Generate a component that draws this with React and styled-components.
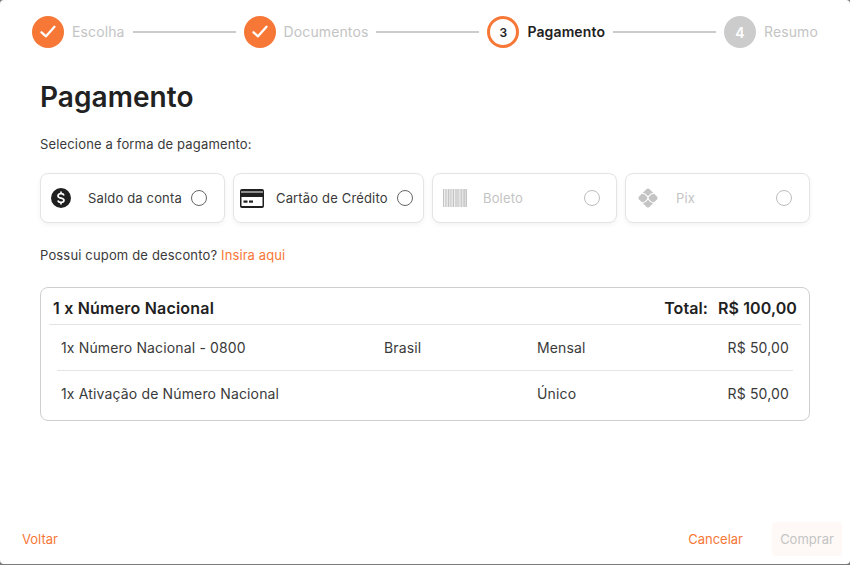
import React from "react";
import styled, { createGlobalStyle } from "styled-components";

const ORANGE = "#f77736";
const DARK = "#212121";
const TEXT = "#3a3a3a";
const MUTED = "#c4c4c4";

const Global = createGlobalStyle`
  html, body { margin: 0; padding: 0; background: #7a7a7a; }
  body { font-family: Inter, "Liberation Sans", sans-serif; }
  * { box-sizing: border-box; }
`;

const Modal = styled.div`
  width: 850px;
  height: 564px;
  background: #fff;
  border-radius: 4px;
  display: flex;
  flex-direction: column;
  overflow: hidden;
`;

const Stepper = styled.div`
  display: flex;
  align-items: center;
  padding: 16px 32px 0;
  height: 48px;
`;

const Step = styled.div`
  display: flex;
  align-items: center;
  gap: 8px;
  flex: none;
`;

const Circle = styled.div`
  width: 32px;
  height: 32px;
  border-radius: 50%;
  display: flex;
  align-items: center;
  justify-content: center;
  flex: none;
  font-size: ${p => (p.$state === "active" ? "12px" : "14px")};
  font-weight: 600;
  color: ${p => (p.$state === "active" ? DARK : "#fff")};
  background: ${p => (p.$state === "done" ? ORANGE : p.$state === "active" ? "#fff" : "#cccccc")};
  border: ${p => (p.$state === "active" ? `3px solid ${ORANGE}` : "none")};
`;

const StepLabel = styled.span`
  padding-bottom: 1px;
  font-size: 14px;
  letter-spacing: 0.12px;
  font-weight: ${p => (p.$active ? 600 : 400)};
  color: ${p => (p.$active ? DARK : MUTED)};
`;

const Connector = styled.div`
  flex: 1;
  height: 2px;
  margin: 0 8px;
  background: #cccccc;
`;

const Body = styled.main`
  flex: 1;
  display: flex;
  flex-direction: column;
  padding: 0 40px;
`;

const Title = styled.h1`
  margin: 32px 0 0;
  font-size: 28px;
  line-height: 34px;
  font-weight: 600;
  letter-spacing: 0.05px;
  color: ${DARK};
`;

const Hint = styled.p`
  margin: 22px 0 0;
  font-size: 13px;
  line-height: 17px;
  letter-spacing: 0.16px;
  color: ${TEXT};
`;

const Methods = styled.div`
  display: flex;
  gap: 8px;
  margin-top: 20px;
`;

const Method = styled.div`
  width: ${p => p.$w}px;
  height: 50px;
  flex: none;
  display: flex;
  align-items: center;
  padding: 0 ${p => p.$pr}px 0 ${p => p.$pl}px;
  background: #fff;
  border: 1px solid #e4e4e4;
  border-radius: 8px;
  box-shadow: 0 2px 5px rgba(0, 0, 0, 0.05);
  color: ${p => (p.$off ? MUTED : TEXT)};
`;

const IconSlot = styled.div`
  width: ${p => p.$w}px;
  flex: none;
  display: flex;
  align-items: center;
`;

const MethodLabel = styled.span`
  flex: 1;
  font-size: 13px;
  letter-spacing: 0.16px;
  white-space: nowrap;
`;

const Radio = styled.span`
  width: 16px;
  height: 16px;
  flex: none;
  border-radius: 50%;
  border: 1.75px solid ${p => (p.$off ? "#bdbdbd" : "#666666")};
`;

const Coupon = styled.p`
  margin: 24px 0 0;
  font-size: 13px;
  line-height: 17px;
  letter-spacing: 0.16px;
  color: ${TEXT};
`;

const Link = styled.a`
  letter-spacing: 0.1px;
  color: ${ORANGE};
`;

const Summary = styled.section`
  margin-top: 23px;
  height: 134px;
  border: 1px solid #cfcfcf;
  border-radius: 8px;
  padding: 0 8px;
  display: flex;
  flex-direction: column;
`;

const SummaryHead = styled.div`
  height: 37px;
  flex: none;
  display: flex;
  align-items: center;
  justify-content: space-between;
  padding: 3px 4px 0;
  border-bottom: 1px solid #e4e4e4;
  font-size: 16px;
  font-weight: 600;
  letter-spacing: 0.2px;
  color: ${DARK};
`;

const Total = styled.span`
  display: flex;
  gap: 10px;
  letter-spacing: 0.1px;
`;

const Rows = styled.div`
  margin: 0 8px;
`;

const Row = styled.div`
  height: ${p => (p.$last ? 44 : 46)}px;
  display: grid;
  grid-template-columns: 323px 153px 1fr auto;
  align-items: center;
  padding: 0 4px;
  font-size: 14px;
  letter-spacing: 0.15px;
  color: ${TEXT};
  border-bottom: ${p => (p.$last ? "none" : "1px solid #e4e4e4")};
`;

const Footer = styled.footer`
  height: 52px;
  flex: none;
  display: flex;
  align-items: center;
  justify-content: space-between;
  padding: 2px 8px 0 22px;
`;

const FooterRight = styled.div`
  display: flex;
  align-items: center;
  gap: 29px;
`;

const TextButton = styled.button`
  border: 0;
  padding: 0;
  background: none;
  font: inherit;
  font-size: 13px;
  font-weight: 400;
  color: ${ORANGE};
`;

const BuyButton = styled.button`
  width: 70px;
  height: 34px;
  border: 0;
  border-radius: 4px;
  background: #fef9f6;
  font: inherit;
  font-size: 13px;
  font-weight: 400;
  color: #c4c4c4;
`;

const Check = () => (
  <svg width="18" height="18" viewBox="0 0 18 18" fill="none" stroke="#fff" strokeWidth="2.3" strokeLinecap="round" strokeLinejoin="round">
    <path d="M2.500 9.300 L7 13.300 L15.500 3.800" />
  </svg>
);

const MoneyIcon = () => (
  <svg width="20" height="20" viewBox="0 0 20 20">
    <circle cx="10" cy="10" r="10" fill="#1f1f1f" />
    <path d="M13 7.500c-.3-1.100-1.500-1.800-3-1.800-1.700 0-3 .8-3 2.200 0 1.400 1.300 1.800 3 2.200s3 .8 3 2.200c0 1.300-1.300 2.100-3 2.100-1.600 0-2.800-.8-3.100-1.900" fill="none" stroke="#fff" strokeWidth="1.700" />
    <path d="M10 3.400v2.600M10 14v2.600" stroke="#fff" strokeWidth="1.700" />
  </svg>
);

const CardIcon = () => (
  <svg width="24" height="19" viewBox="0 0 24 19">
    <rect width="24" height="19" rx="2" fill="#1f1f1f" />
    <rect x="1" y="2.500" width="22" height="1" fill="#fff" />
    <rect x="1.500" y="8" width="21" height="9" fill="#fff" />
    <rect x="3.500" y="11.500" width="4" height="2.200" fill="#1f1f1f" />
    <rect x="9" y="11.500" width="4" height="2.200" fill="#1f1f1f" />
  </svg>
);

const BarcodeIcon = () => (
  <svg width="24" height="18" viewBox="0 0 24 18" fill="#c4c4c4">
    <rect width="24" height="18" fill="#ededed" />
    {[[0, 1], [2, 0.6], [3.500, 0.6], [5, 1.200], [7.200, 0.6], [8.600, 0.6], [10, 1], [12, 0.6], [13.400, 1.200], [15.400, 0.6], [16.800, 0.6], [18.200, 1], [20, 0.6], [21.200, 0.8], [22.600, 1.400]].map(([x, w]) => (
      <rect key={x} x={x} y="0" width={w} height="18" />
    ))}
  </svg>
);

const PixIcon = () => (
  <svg width="20" height="20" viewBox="0 0 20 20" fill="#c4c4c4">
    <path d="M8.600 1Q10-.2 11.400 1L15.200 4.800Q12.400 5 10 8.200 7.600 5 4.800 4.800Z" />
    <path d="M8.600 19Q10 20.200 11.400 19L15.200 15.200Q12.400 15 10 11.800 7.600 15 4.800 15.200Z" />
    <path d="M1 8.600L3.900 5.700Q7 5.700 9.200 9.300 9.600 10 9.200 10.700 7 14.300 3.900 14.300L1 11.400Q-.2 10 1 8.600Z" />
    <path d="M19 8.600L16.100 5.700Q13 5.700 10.800 9.300 10.400 10 10.800 10.700 13 14.300 16.100 14.300L19 11.400Q20.200 10 19 8.600Z" />
  </svg>
);

const steps = [
  { label: "Escolha", state: "done" },
  { label: "Documentos", state: "done" },
  { label: "Pagamento", state: "active", n: 3 },
  { label: "Resumo", state: "todo", n: 4 },
];

const methods = [
  { label: "Saldo da conta", w: 185, pl: 10, pr: 17, slot: 37, icon: <MoneyIcon /> },
  { label: "Cartão de Crédito", w: 191, pl: 6, pr: 10, slot: 36, icon: <CardIcon /> },
  { label: "Boleto", w: 185, pl: 10, pr: 16, slot: 40, icon: <BarcodeIcon />, off: true },
  { label: "Pix", w: 185, pl: 12, pr: 17, slot: 38, icon: <PixIcon />, off: true },
];

const rows = [
  ["1x Número Nacional - 0800", "Brasil", "Mensal", "R$ 50,00"],
  ["1x Ativação de Número Nacional", "", "Único", "R$ 50,00"],
];

export default function App() {
  return (
    <Modal>
      <Global />
      <Stepper>
        {steps.map((s, i) => (
          <React.Fragment key={s.label}>
            <Step>
              <Circle $state={s.state}>{s.state === "done" ? <Check /> : s.n}</Circle>
              <StepLabel $active={s.state === "active"}>{s.label}</StepLabel>
            </Step>
            {i < steps.length - 1 && <Connector />}
          </React.Fragment>
        ))}
      </Stepper>
      <Body>
        <Title>Pagamento</Title>
        <Hint>Selecione a forma de pagamento:</Hint>
        <Methods>
          {methods.map(m => (
            <Method key={m.label} $w={m.w} $pl={m.pl} $pr={m.pr} $off={m.off}>
              <IconSlot $w={m.slot}>{m.icon}</IconSlot>
              <MethodLabel>{m.label}</MethodLabel>
              <Radio $off={m.off} />
            </Method>
          ))}
        </Methods>
        <Coupon>
          Possui cupom de desconto? <Link>Insira aqui</Link>
        </Coupon>
        <Summary>
          <SummaryHead>
            <span>1 x Número Nacional</span>
            <Total>
              <span>Total:</span>
              <span>R$ 100,00</span>
            </Total>
          </SummaryHead>
          <Rows>
            {rows.map((r, i) => (
              <Row key={r[0]} $last={i === rows.length - 1}>
                {r.map((c, j) => (
                  <span key={j}>{c}</span>
                ))}
              </Row>
            ))}
          </Rows>
        </Summary>
      </Body>
      <Footer>
        <TextButton>Voltar</TextButton>
        <FooterRight>
          <TextButton>Cancelar</TextButton>
          <BuyButton>Comprar</BuyButton>
        </FooterRight>
      </Footer>
    </Modal>
  );
}
